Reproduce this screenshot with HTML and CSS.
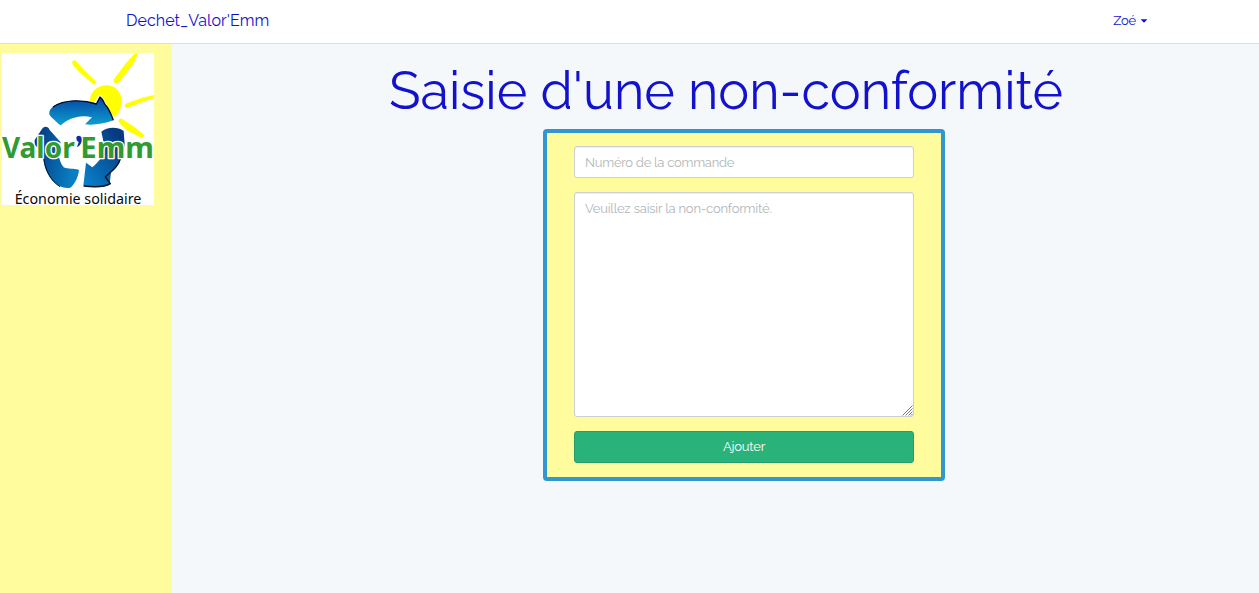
FILE: index.html
```html
<!DOCTYPE html>
<html lang="fr">
<head>
<meta charset="utf-8">
<title>Dechet_Valor'Emm</title>
<link rel="stylesheet" href="styles.css">
</head>
<body>
<nav class="navbar">
  <a class="brand">Dechet_Valor'Emm</a>
  <a class="user"><span class="user-name">Zoé</span><span class="caret"></span></a>
</nav>
<div class="layout">
  <aside class="sidebar">
    <svg class="logo" viewBox="6 39 456 456" role="img" aria-label="Valor'Emm">
      <defs>
        <linearGradient id="top" x1="0" y1="0" x2="0" y2="1"><stop offset="0" stop-color="#0646a4"/><stop offset="1" stop-color="#0b9fd0"/></linearGradient>
        <linearGradient id="right" x1="1" y1="0" x2="0" y2="1"><stop offset="0.15" stop-color="#053a80"/><stop offset="1" stop-color="#0885cd"/></linearGradient>
        <linearGradient id="left" x1="0" y1="0" x2="1" y2="0.3"><stop offset="0" stop-color="#04357e"/><stop offset="1" stop-color="#087fc2"/></linearGradient>
      </defs>
      <rect x="6" y="39" width="456" height="456" fill="#fff"/>
      <g fill="#ff0" stroke="#ff0" stroke-width="5" stroke-linejoin="round">
        <path d="M219 66C222 61 228 64 231 71L255 96 286 126C287 130 283 132 280 130L247 101 221 75Z"/>
        <path d="M406 42H411L399 69 356 125C350 130 343 128 343 121L379 72Z"/>
        <path d="M459 168V173L431 182 382 201C376 201 374 197 379 193L430 175Z"/>
        <path d="M358 241C361 236 368 239 373 244L403 264 430 286C431 291 425 292 420 289L382 269 362 250Z"/>
        <path stroke="none" d="M270 176C276 149 297 135 325 136C351 139 367 160 364 190C362 212 355 224 342 231L270 185Z"/>
      </g>
      <path fill="#fff" stroke="#fff" stroke-width="12" stroke-linejoin="round" d="M287 191 300 171 340 242 255 255Z"/>
      <path fill="url(#top)" d="M148 222C145 201 176 187 208 183C238 180 267 184 289 192L299 171C307 174 312 185 315 193C328 205 334 220 340 241C310 252 280 256 255 253L276 232C239 222 207 236 187 252C182 258 177 254 173 249C159 236 150 229 148 222Z"/>
      <path fill="none" stroke="#050a19" stroke-width="4" stroke-linejoin="round" d="M159 201C193 178 249 178 289 192L300 171C309 177 311 187 315 193C329 208 333 222 340 241"/>
      <path fill="url(#left)" d="M126 267C133 257 145 259 149 270L182 307C171 330 174 360 191 382C205 389 221 384 237 390C235 410 225 432 211 443C179 449 151 424 137 388C132 374 129 351 129 333L104 316V300Z"/>
      <path fill="none" stroke="#05132b" stroke-width="3" d="M131 355C137 394 154 424 180 440"/>
      <path fill="url(#right)" d="M304 275C320 261 352 258 371 273L374 313C371 356 355 377 333 397L329 432C309 444 270 441 250 437L258 368 277 382C297 367 311 345 314 322Z"/>
      <path fill="none" stroke="#06101f" stroke-width="4" stroke-linejoin="round" d="M361 354C357 378 338 391 316 411L331 431C310 444 276 441 251 438"/>
      <g class="logo-name">
        <text x="6" y="355" textLength="218" lengthAdjust="spacingAndGlyphs">Valor</text>
        <text x="241" y="355" textLength="221" lengthAdjust="spacingAndGlyphs">Emm</text>
      </g>
      <path fill="#0b2fa0" stroke="#fff" stroke-width="3" paint-order="stroke" d="M229 294C229 286 244 284 245 296C246 310 239 318 231 321L236 306C231 304 229 300 229 294Z"/>
      <text class="logo-tagline" x="44" y="492" textLength="380" lengthAdjust="spacingAndGlyphs">Économie solidaire</text>
    </svg>
  </aside>
  <main class="content">
    <h1 class="title">Saisie d'une non-conformité</h1>
    <form class="panel">
      <input class="field field-order" type="text" placeholder="Numéro de la commande">
      <div class="area-wrap">
        <textarea class="field field-area" placeholder="Veuillez saisir la non-conformité."></textarea>
        <svg class="grip" viewBox="0 0 11 11"><path d="M.5 10.5 10.5.5M3.5 10.5l7-7M6.5 10.5l4-4M9 10.5l1.5-1.5"/></svg>
      </div>
      <button class="submit" type="button">Ajouter</button>
    </form>
  </main>
</div>
</body>
</html>
```
FILE: styles.css
```css
* { box-sizing: border-box; }
body {
  margin: 0;
  height: 100vh;
  display: flex;
  flex-direction: column;
  overflow: hidden;
  background: #f5f8fa;
  font-family: Raleway, Lato, sans-serif;
  font-size: 13px;
  color: #1111ce;
}
.navbar {
  flex: 0 0 44px;
  display: flex;
  justify-content: space-between;
  padding: 0 111px 0 126px;
  background: #fff;
  border-bottom: 1px solid #d3e0e9;
}
.brand { font-size: 16px; line-height: 41px; letter-spacing: .06px; }
.user { display: flex; align-items: center; gap: 4px; height: 42px; }
.user-name { line-height: 15px; padding-bottom: 1px; letter-spacing: -.2px; }
.caret {
  border-top: 4px solid;
  border-left: 4px solid transparent;
  border-right: 4px solid transparent;
  transform: scale(.85);
}
.layout { flex: 1; display: flex; min-height: 0; }
.sidebar { flex: 0 0 172px; padding: 9px 2px; background: #fffc9e; }
.logo { display: block; width: 152px; height: 152px; overflow: visible; }
.logo-name text {
  font: 700 88px "Noto Sans", sans-serif;
  fill: #319b31;
  stroke: #fff;
  stroke-width: 8px;
  stroke-linejoin: round;
  paint-order: stroke;
}
.logo-tagline { font: 400 44px "Noto Sans", sans-serif; fill: #080808; }
.content { flex: 1; padding: 17px 0 0 217px; }
.title {
  margin: 0;
  font-size: 52px;
  line-height: 60px;
  font-weight: 400;
  white-space: nowrap;
}
.panel {
  display: flex;
  flex-direction: column;
  gap: 14px;
  width: 402px;
  height: 352px;
  margin: 8px 0 0 154px;
  padding: 13px 27px 14px;
  background: #fffc9e;
  border: 4px solid #3097d1;
  border-radius: 4px;
}
.field {
  display: block;
  width: 100%;
  height: 32px;
  padding: 6px 10px;
  border: 1px solid #ccd0d2;
  border-radius: 3px;
  background: #fff;
  box-shadow: inset 0 1px 1px rgba(0, 0, 0, .075);
  font: 400 13px/20px Raleway, Lato, sans-serif;
  letter-spacing: -.2px;
}
.field-order { letter-spacing: -.27px; }
.field::placeholder { color: #b1b7ba; opacity: 1; }
.area-wrap { position: relative; }
.field-area { height: 225px; resize: none; }
.grip {
  position: absolute;
  right: 1px;
  bottom: 1px;
  width: 11px;
  height: 11px;
  fill: none;
  stroke: #777;
  stroke-width: 1;
}
.submit {
  height: 32px;
  padding: 0 0 2px;
  border: 1px solid #259d6d;
  border-radius: 3px;
  background: #2ab27b;
  color: #fff;
  font: 400 13px Raleway, Lato, sans-serif;
  letter-spacing: -.2px;
}
```
